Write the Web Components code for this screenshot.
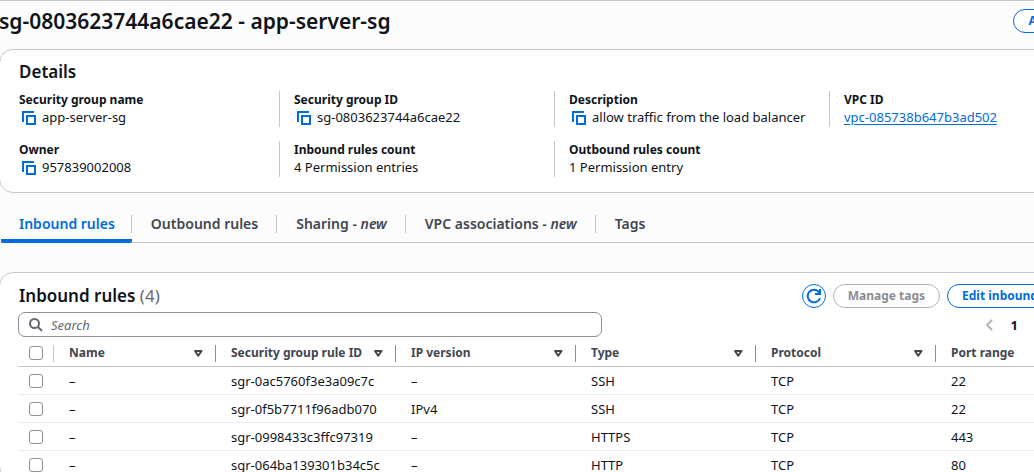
<!DOCTYPE html>
<html lang="en">
<head>
<meta charset="utf-8">
<title>Security group</title>
<style>
  html, body { margin: 0; height: 100%; }
  body {
    overflow: hidden;
    background: #fcfcfd;
    color: #0f141a;
    font-family: "Noto Sans", "Open Sans", sans-serif;
    font-size: 13px;
    line-height: 18px;
    --blue: #006ce0;
    --line: #c6c6cd;
    --row-line: #ebebf0;
    --muted: #656871;
    --heading: #424650;
    --control: #8c8c94;
  }
</style>
</head>
<body>
<sg-console></sg-console>

<script>
const define = (name, html, setup) => {
  const template = document.createElement('template');
  template.innerHTML = html;
  customElements.define(name, class extends HTMLElement {
    constructor() {
      super();
      this.attachShadow({ mode: 'open' }).append(template.content.cloneNode(true));
    }
    connectedCallback() { if (setup) setup(this, this.shadowRoot); }
  });
};

/* Pill button; "disabled" and "icon" variants */
define('sg-button', `
  <style>
    :host { display: block; flex: none; }
    button {
      box-sizing: border-box; height: 24px; padding: 0 14px; margin: 0; display: flex;
      align-items: center; justify-content: center; gap: 8px;
      border: 1px solid var(--blue); border-radius: 12px; background: #fff;
      color: var(--blue); font: bold 12px/18px "Noto Sans", sans-serif; white-space: nowrap;
    }
    button:disabled { color: #8c8c94; border-color: #b4b4bb; }
    :host([icon]) button { width: 24px; padding: 0; }
  </style>
  <button type="button"><slot></slot></button>`,
  (host, root) => {
    const button = root.querySelector('button');
    button.disabled = host.hasAttribute('disabled');
    if (host.hasAttribute('label')) button.setAttribute('aria-label', host.getAttribute('label'));
  });

/* White rounded container */
define('sg-card', `
  <style>
    :host {
      display: block; background: #fff; border: 1px solid var(--line);
      border-radius: 14px; padding: 0 18px;
    }
  </style>
  <slot></slot>`);

/* Label and value pair, with an optional copy button */
define('sg-field', `
  <style>
    :host { display: block; height: 36px; border-left: 1px solid var(--line); padding-left: 14px; }
    :host([first]) { border-left: 0; padding-left: 0; }
    dl, dt, dd { margin: 0; }
    dt { font-weight: bold; font-size: 12px; line-height: 17px; }
    dd { display: flex; align-items: center; line-height: 19px; white-space: nowrap; }
    button { display: none; width: 23px; height: 18px; padding: 0 0 0 2px; border: 0; background: none; color: var(--blue); }
    :host([copy]) button { display: block; }
    svg { display: block; }
  </style>
  <dl>
    <dt></dt>
    <dd>
      <button type="button" aria-label="Copy">
        <svg width="16" height="16" viewBox="0 0 16 16" fill="none" stroke="currentColor" stroke-width="2">
          <path d="M2 12V2h11"/><path d="M6 6h8v8H6z"/>
        </svg>
      </button>
      <slot></slot>
    </dd>
  </dl>`,
  (host, root) => { root.querySelector('dt').textContent = host.getAttribute('label'); });

define('sg-details', `
  <style>
    :host { display: block; }
    h2 { margin: 0; padding: 11px 1px 8px; font-size: 17px; font-weight: 600; line-height: 22px; }
    .grid { display: grid; grid-template-columns: 260fr 275fr 275fr 275fr; gap: 14px 0; padding: 0 0 15px 1px; }
    a { color: var(--blue); text-decoration: underline; text-underline-offset: 2px; }
  </style>
  <sg-card>
    <h2>Details</h2>
    <div class="grid">
      <sg-field first copy label="Security group name">app-server-sg</sg-field>
      <sg-field copy label="Security group ID">sg-0803623744a6cae22</sg-field>
      <sg-field copy label="Description">allow traffic from the load balancer</sg-field>
      <sg-field label="VPC ID"><a href="#vpc">vpc-085738b647b3ad502</a></sg-field>
      <sg-field first copy label="Owner">957839002008</sg-field>
      <sg-field label="Inbound rules count">4 Permission entries</sg-field>
      <sg-field label="Outbound rules count">1 Permission entry</sg-field>
    </div>
  </sg-card>`);

define('sg-tabs', `
  <style>
    :host { display: block; border-bottom: 1px solid var(--line); }
    nav { display: flex; padding-left: 2px; }
    a {
      position: relative; padding: 21px 19px 5px 19px; margin-bottom: -1px;
      color: var(--heading); font-weight: 600; font-size: 14px; line-height: 20px;
      border-bottom: 4px solid transparent; text-decoration: none; white-space: nowrap;
    }
    a:first-child { padding-left: 18px; padding-right: 17px; color: var(--blue); border-color: var(--blue); border-radius: 2px; }
    a:not(:last-child)::after {
      content: ""; position: absolute; right: 0; top: 22px; height: 18px; width: 1px; background: var(--line);
    }
  </style>
  <nav aria-label="Security group sections">
    <a href="#inbound" aria-current="page">Inbound rules</a>
    <a href="#outbound">Outbound rules</a>
    <a href="#sharing">Sharing - <em>new</em></a>
    <a href="#vpc-associations">VPC associations - <em>new</em></a>
    <a href="#tags">Tags</a>
  </nav>`);

const columns = ['Name', 'Security group rule ID', 'IP version', 'Type', 'Protocol', 'Port range'];
const rules = [
  ['–', 'sgr-0ac5760f3e3a09c7c', '–', 'SSH', 'TCP', '22'],
  ['–', 'sgr-0f5b7711f96adb070', 'IPv4', 'SSH', 'TCP', '22'],
  ['–', 'sgr-0998433c3ffc97319', '–', 'HTTPS', 'TCP', '443'],
  ['–', 'sgr-064ba139301b34c5c', '–', 'HTTP', 'TCP', '80'],
];

define('sg-rules-table', `
  <style>
    :host { display: block; }
    table { width: 100%; border-collapse: separate; border-spacing: 0; table-layout: fixed; }
    th, td { box-sizing: border-box; padding: 0 0 0 15px; text-align: left; white-space: nowrap; }
    th { width: 180px; height: 30px; padding-top: 3px; color: var(--heading); font-size: 12px; border-bottom: 1px solid var(--line); }
    th:last-child { width: auto; }
    td { height: 28px; border-bottom: 1px solid var(--row-line); }
    .pick { width: 36px; padding-left: 11px; }
    .name { width: 162px; }
    .cell { display: flex; align-items: center; justify-content: space-between; height: 17px; border-right: 1px solid var(--control); }
    .pick .cell { border-color: var(--line); }
    th:last-child .cell { border: 0; }
    button { flex: none; width: 10px; height: 12px; margin-right: 12px; padding: 0; border: 0; background: none; color: var(--heading); }
    svg { display: block; }
    input {
      appearance: none; display: block; box-sizing: border-box; width: 14px; height: 14px; margin: 0;
      border: 1px solid var(--control); border-radius: 3px; background: #fff;
    }
  </style>
  <table>
    <thead><tr><th class="pick" scope="col"><div class="cell"><input type="checkbox" aria-label="Select all rules"></div></th></tr></thead>
    <tbody></tbody>
  </table>`,
  (host, root) => {
    root.querySelector('thead tr').insertAdjacentHTML('beforeend', columns.map((name, i) => `
      <th scope="col"${i ? '' : ' class="name"'}><div class="cell"><span>${name}</span>
        ${i < columns.length - 1 ? `<button type="button" aria-label="Sort by ${name}"><svg width="10" height="12" viewBox="0 0 10 12" fill="none" stroke="currentColor" stroke-width="2" stroke-linejoin="round"><path d="M2 4h6.500L5.250 8.800z"/></svg></button>` : ''}
      </div></th>`).join(''));
    root.querySelector('tbody').innerHTML = rules.map(row => `
      <tr><td class="pick"><input type="checkbox" aria-label="Select ${row[1]}"></td>${row.map(v => `<td>${v}</td>`).join('')}</tr>`).join('');
  });

define('sg-rules', `
  <style>
    :host { display: block; }
    header { display: flex; align-items: center; gap: 7px; padding: 11px 18px 0 1px; }
    h2 { flex: 1; margin: 0; font-size: 17px; font-weight: 600; line-height: 24px; }
    h2 span { font-weight: normal; color: var(--muted); }
    .tools { display: flex; align-items: center; justify-content: space-between; padding-top: 4px; }
    .search { position: relative; flex: 0 0 584px; color: var(--muted); }
    .search svg { position: absolute; left: 11px; top: 6px; }
    input {
      display: block; box-sizing: border-box; width: 100%; height: 25px; margin: 0; padding: 0 12px 0 32px;
      border: 1px solid var(--control); border-radius: 7px; background: #fff;
      font: 13px/18px "Noto Sans", sans-serif; color: #0f141a;
    }
    input::placeholder { color: var(--muted); font-style: italic; opacity: 1; }
    .pages { display: flex; align-items: center; gap: 18px; padding-right: 86px; }
    .pages button { margin: 0; padding: 0; border: 0; background: none; color: #b4b4bb; }
    .pages svg { display: block; }
  </style>
  <sg-card>
    <header>
      <h2>Inbound rules <span>(4)</span></h2>
      <sg-button icon label="Refresh">
        <svg width="16" height="16" viewBox="0 0 16 16" fill="none" stroke="currentColor" stroke-width="2"><path d="M14 10A6.300 6.300 0 1 1 12.500 3.600L14 5.500"/><path d="M14 1v5H9"/></svg>
      </sg-button>
      <sg-button disabled>Manage tags</sg-button>
      <sg-button>Edit inbound rules</sg-button>
    </header>
    <div class="tools">
      <div class="search">
        <input type="search" placeholder="Search" aria-label="Search rules">
        <svg width="14" height="14" viewBox="0 0 14 14" fill="none" stroke="currentColor" stroke-width="2"><circle cx="5.500" cy="5.500" r="4.500"/><path d="M9 9l4 4"/></svg>
      </div>
      <div class="pages">
        <button type="button" aria-label="Previous page"><svg width="8" height="12" viewBox="0 0 8 12" fill="none" stroke="currentColor" stroke-width="2"><path d="M7 1L2 6l5 5"/></svg></button>
        <b>1</b>
      </div>
    </div>
    <sg-rules-table></sg-rules-table>
  </sg-card>`);

/* The console is wider than its window, so its right side is cut off */
define('sg-console', `
  <style>
    :host { display: block; width: calc(100% + 90px); margin-left: -1px; border-top: 1px solid var(--line); }
    header { display: flex; align-items: center; justify-content: space-between; height: 39px; padding: 0 17px 9px 0; }
    h1 { margin: 0; font-size: 21px; font-weight: 600; line-height: 26px; white-space: nowrap; }
    sg-tabs { margin-bottom: 29px; }
  </style>
  <header>
    <h1>sg-0803623744a6cae22 - app-server-sg</h1>
    <sg-button>Actions <svg width="10" height="8" viewBox="0 0 10 8" fill="currentColor"><path d="M0 1h10L5 7z"/></svg></sg-button>
  </header>
  <sg-details></sg-details>
  <sg-tabs></sg-tabs>
  <sg-rules></sg-rules>`);
</script>
</body>
</html>
